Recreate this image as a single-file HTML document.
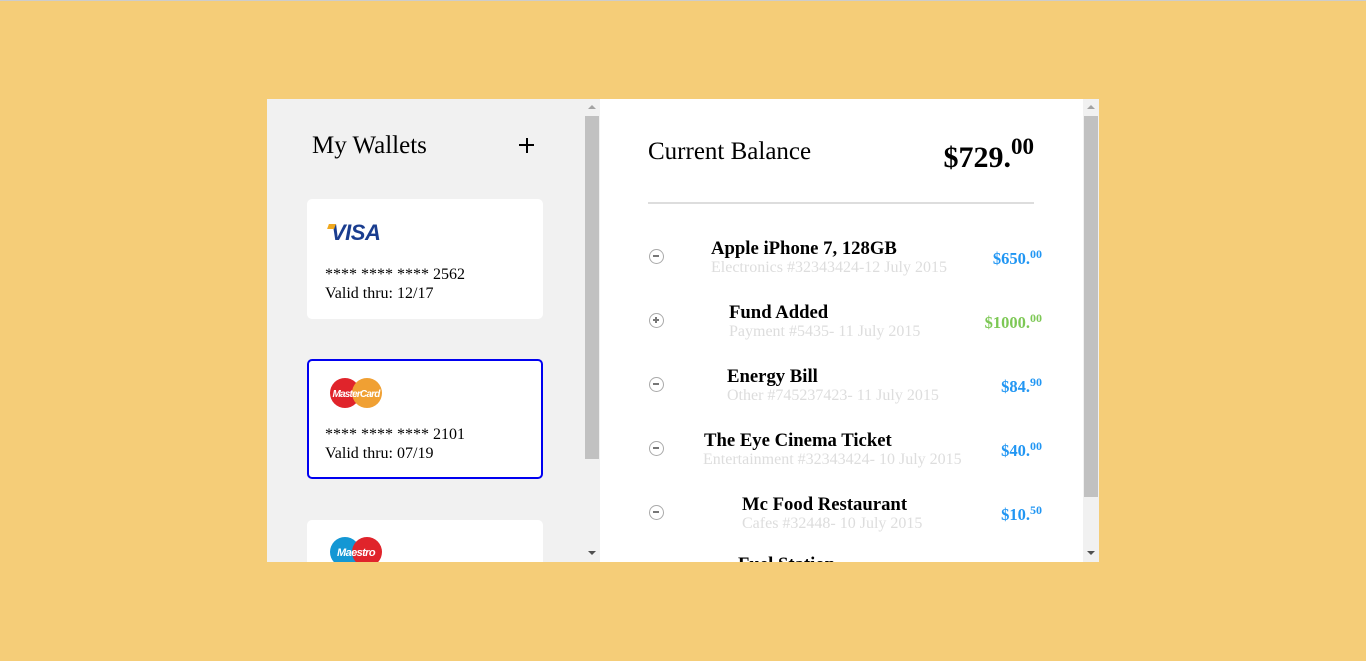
<!DOCTYPE html>
<html><head><style>
*{margin:0;padding:0;box-sizing:border-box}
body{width:1366px;height:661px;background:#f5cd78;position:relative;overflow:hidden;font-family:"Liberation Serif",serif}
.abs{position:absolute}
#left{left:267px;top:99px;width:333px;height:463px;background:#f1f1f1;overflow:hidden}
#right{left:600px;top:99px;width:499px;height:463px;background:#fff;overflow:hidden}
.card{position:absolute;left:40px;width:236px;height:120px;background:#fff;border-radius:5px}
.card .n{position:absolute;left:18px;top:66px;font-size:16px;line-height:19px;color:#000}
.row{position:absolute;left:0;width:499px;height:50px}
.ic{position:absolute;left:49px;width:15px;height:15px;border:1.5px solid #aaa;border-radius:50%}
.ic:before{content:"";position:absolute;left:3px;top:5.2px;width:6px;height:1.5px;background:#777}
.ic.p:after{content:"";position:absolute;left:5.2px;top:3px;width:1.5px;height:6px;background:#777}
.t{position:absolute;font-weight:bold;font-size:18.7px;color:#000;white-space:nowrap}
.s{position:absolute;font-size:16px;color:#ddd;white-space:nowrap}
.a{position:absolute;right:57px;font-weight:bold;font-size:16.5px;color:#2196f3;white-space:nowrap}
.a sup{font-size:12px;vertical-align:6px}
.sb{position:absolute;width:16px;background:#f1f1f1}
</style></head><body>
<div class="abs" style="left:0;top:0;width:1366px;height:1px;background:#ccc"></div>
<div id="left" class="abs">
  <div class="abs" style="left:45px;top:33px;font-size:25px">My Wallets</div>
  <div class="abs" style="left:252px;top:45px;width:15px;height:2px;background:#000"></div>
  <div class="abs" style="left:258.5px;top:38.5px;width:2px;height:15px;background:#000"></div>
  <div class="card" style="top:100px">
    <div class="abs" style="left:24px;top:21px;font-family:'Liberation Sans',sans-serif;font-weight:bold;font-style:italic;font-size:22px;color:#1a3d8f;letter-spacing:-0.5px">VISA</div>
    <div class="abs" style="left:21px;top:25px;width:7px;height:5px;background:#f0a81e;transform:skewX(-20deg)"></div>
    <div class="n">**** **** **** 2562<br>Valid thru: 12/17</div>
  </div>
  <div class="card" style="top:260px;border:2px solid #0000f0">
    <svg class="abs" style="left:21px;top:16px" width="54" height="32"><circle cx="15" cy="16" r="15" fill="#e0242b"/><circle cx="37" cy="16" r="15" fill="#f0a033"/><text x="26" y="20" text-anchor="middle" font-family="Liberation Sans" font-style="italic" font-weight="bold" font-size="10" fill="#fff" letter-spacing="-0.8">MasterCard</text></svg>
    <div class="n" style="left:16px;top:64px">**** **** **** 2101<br>Valid thru: 07/19</div>
  </div>
  <div class="card" style="top:421px">
    <svg class="abs" style="left:23px;top:16px" width="54" height="32"><circle cx="15" cy="16" r="15" fill="#1497d4"/><circle cx="37" cy="16" r="15" fill="#e0242b"/><text x="26" y="20" text-anchor="middle" font-family="Liberation Sans" font-style="italic" font-weight="bold" font-size="11" fill="#fff" letter-spacing="-0.6">Maestro</text></svg>
  </div>
  <div class="sb" style="left:317px;top:0;height:463px"></div>
  <div class="abs" style="left:318px;top:17px;width:14px;height:343px;background:#c1c1c1"></div>
  <div class="abs" style="left:321px;top:6px;border:4px solid transparent;border-bottom:4px solid #a3a3a3;border-top:0"></div>
  <div class="abs" style="left:321px;top:452px;border:4px solid transparent;border-top:4px solid #505050;border-bottom:0"></div>
</div>
<div id="right" class="abs">
  <div class="abs" style="left:48px;top:39px;font-size:25px">Current Balance</div>
  <div class="abs" style="right:65px;top:35px;font-size:30px;font-weight:bold">$729.<sup style="font-size:23px;vertical-align:13px">00</sup></div>
  <div class="abs" style="left:48px;top:103px;width:386px;height:2px;background:#ddd"></div>

  <div class="row" style="top:137px"><div class="ic" style="top:13px"></div><div class="t" style="left:111px;top:2px">Apple iPhone 7, 128GB</div><div class="s" style="left:111px;top:23px">Electronics #32343424-12 July 2015</div><div class="a" style="top:11px">$650.<sup>00</sup></div></div>
  <div class="row" style="top:201px"><div class="ic p" style="top:13px"></div><div class="t" style="left:129px;top:2px">Fund Added</div><div class="s" style="left:129px;top:23px">Payment #5435- 11 July 2015</div><div class="a" style="top:11px;color:#7dc855">$1000.<sup>00</sup></div></div>
  <div class="row" style="top:265px"><div class="ic" style="top:13px"></div><div class="t" style="left:127px;top:2px">Energy Bill</div><div class="s" style="left:127px;top:23px">Other #745237423- 11 July 2015</div><div class="a" style="top:11px">$84.<sup>90</sup></div></div>
  <div class="row" style="top:329px"><div class="ic" style="top:13px"></div><div class="t" style="left:104px;top:2px">The Eye Cinema Ticket</div><div class="s" style="left:103px;top:23px">Entertainment #32343424- 10 July 2015</div><div class="a" style="top:11px">$40.<sup>00</sup></div></div>
  <div class="row" style="top:393px"><div class="ic" style="top:13px"></div><div class="t" style="left:142px;top:2px">Mc Food Restaurant</div><div class="s" style="left:142px;top:23px">Cafes #32448- 10 July 2015</div><div class="a" style="top:11px">$10.<sup>50</sup></div></div>
  <div class="row" style="top:455px"><div class="t" style="left:138px;top:0px">Fuel Station</div></div>

  <div class="sb" style="left:483px;top:0;height:463px"></div>
  <div class="abs" style="left:484px;top:17px;width:14px;height:381px;background:#c1c1c1"></div>
  <div class="abs" style="left:487px;top:6px;border:4px solid transparent;border-bottom:4px solid #a3a3a3;border-top:0"></div>
  <div class="abs" style="left:487px;top:452px;border:4px solid transparent;border-top:4px solid #505050;border-bottom:0"></div>
</div>
</body></html>
